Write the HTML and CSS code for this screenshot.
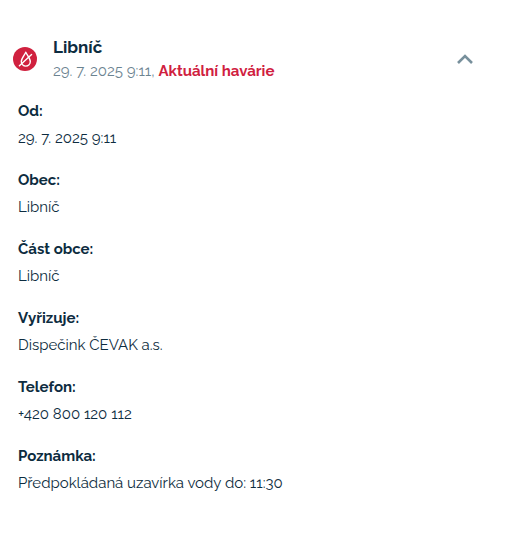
FILE: index.html
```html
<!DOCTYPE html>
<html lang="cs">
<head>
  <meta charset="UTF-8">
  <title>Libníč – Aktuální havárie</title>
  <meta name="viewport" content="width=device-width, initial-scale=1.0">
  <link rel="stylesheet" href="styles.css">
</head>
<body>
  <article class="outage">
    <button class="outage-header" type="button" aria-expanded="true" aria-controls="outage-detail">
      <svg class="outage-icon" viewBox="0 0 24 24" aria-hidden="true">
        <circle cx="12" cy="12" r="12" fill="#d0213f"/>
        <g fill="none" stroke="#fff" stroke-width="1.4" stroke-linecap="round" stroke-linejoin="round">
          <path d="M12.8 5.2C11.6 8 8.3 11.4 8.3 14.6a4.5 4.5 0 0 0 9 0C17.300 11.400 14 8 12.800 5.200z"/>
          <path d="M6.400 18.800 18.600 7.600"/>
        </g>
      </svg>
      <span class="outage-heading">
        <span class="outage-title">Libníč</span>
        <span class="outage-meta">29. 7. 2025 9:11, <strong>Aktuální havárie</strong></span>
      </span>
      <svg class="outage-arrow" viewBox="0 0 18 12" aria-hidden="true">
        <path d="M2 10 9 3l7 7" fill="none" stroke="#78909c" stroke-width="2.6"/>
      </svg>
    </button>

    <dl class="outage-detail" id="outage-detail">
      <div class="item">
        <dt>Od:</dt>
        <dd>29. 7. 2025 9:11</dd>
      </div>
      <div class="item">
        <dt>Obec:</dt>
        <dd>Libníč</dd>
      </div>
      <div class="item">
        <dt>Část obce:</dt>
        <dd>Libníč</dd>
      </div>
      <div class="item">
        <dt>Vyřizuje:</dt>
        <dd>Dispečink ČEVAK a.s.</dd>
      </div>
      <div class="item">
        <dt>Telefon:</dt>
        <dd>+420 800 120 112</dd>
      </div>
      <div class="item">
        <dt>Poznámka:</dt>
        <dd>Předpokládaná uzavírka vody do: 11:30</dd>
      </div>
    </dl>
  </article>

  <script>
    const header = document.querySelector(".outage-header");
    const detail = document.getElementById("outage-detail");

    header.addEventListener("click", () => {
      detail.hidden = !detail.hidden;
      header.setAttribute("aria-expanded", String(!detail.hidden));
    });
  </script>
</body>
</html>
```
FILE: styles.css
```css
body { margin:0; background:#fff; color:#0d2c40; font-family:Raleway,Lato,"Open Sans",sans-serif; font-size:15px; font-variant-numeric:oldstyle-nums; }

.outage { padding:35px 46px 46px 13px; }

/* Hlavička */
.outage-header { display:flex; align-items:center; width:100%; padding:0; border:none; background:none; color:inherit; font:inherit; font-variant-numeric:inherit; line-height:24px; text-align:left; cursor:pointer; }
.outage-icon { flex:none; width:24px; height:24px; margin-right:16px; }
.outage-heading { flex:1; display:flex; flex-direction:column; }
.outage-title { font-size:17px; font-weight:700; }
.outage-meta { color:#6b8390; }
.outage-meta strong { color:#d0213f; font-weight:700; }
.outage-arrow { flex:none; width:18px; height:12px; }
.outage-header[aria-expanded="false"] .outage-arrow { transform:rotate(180deg); }

/* Detail */
.outage-detail { display:flex; flex-direction:column; gap:15px; margin:15px 0 0; padding-left:5px; line-height:27px; }
.outage-detail[hidden] { display:none; }
.item dt { font-weight:700; }
.item dd { margin:0; }
```
